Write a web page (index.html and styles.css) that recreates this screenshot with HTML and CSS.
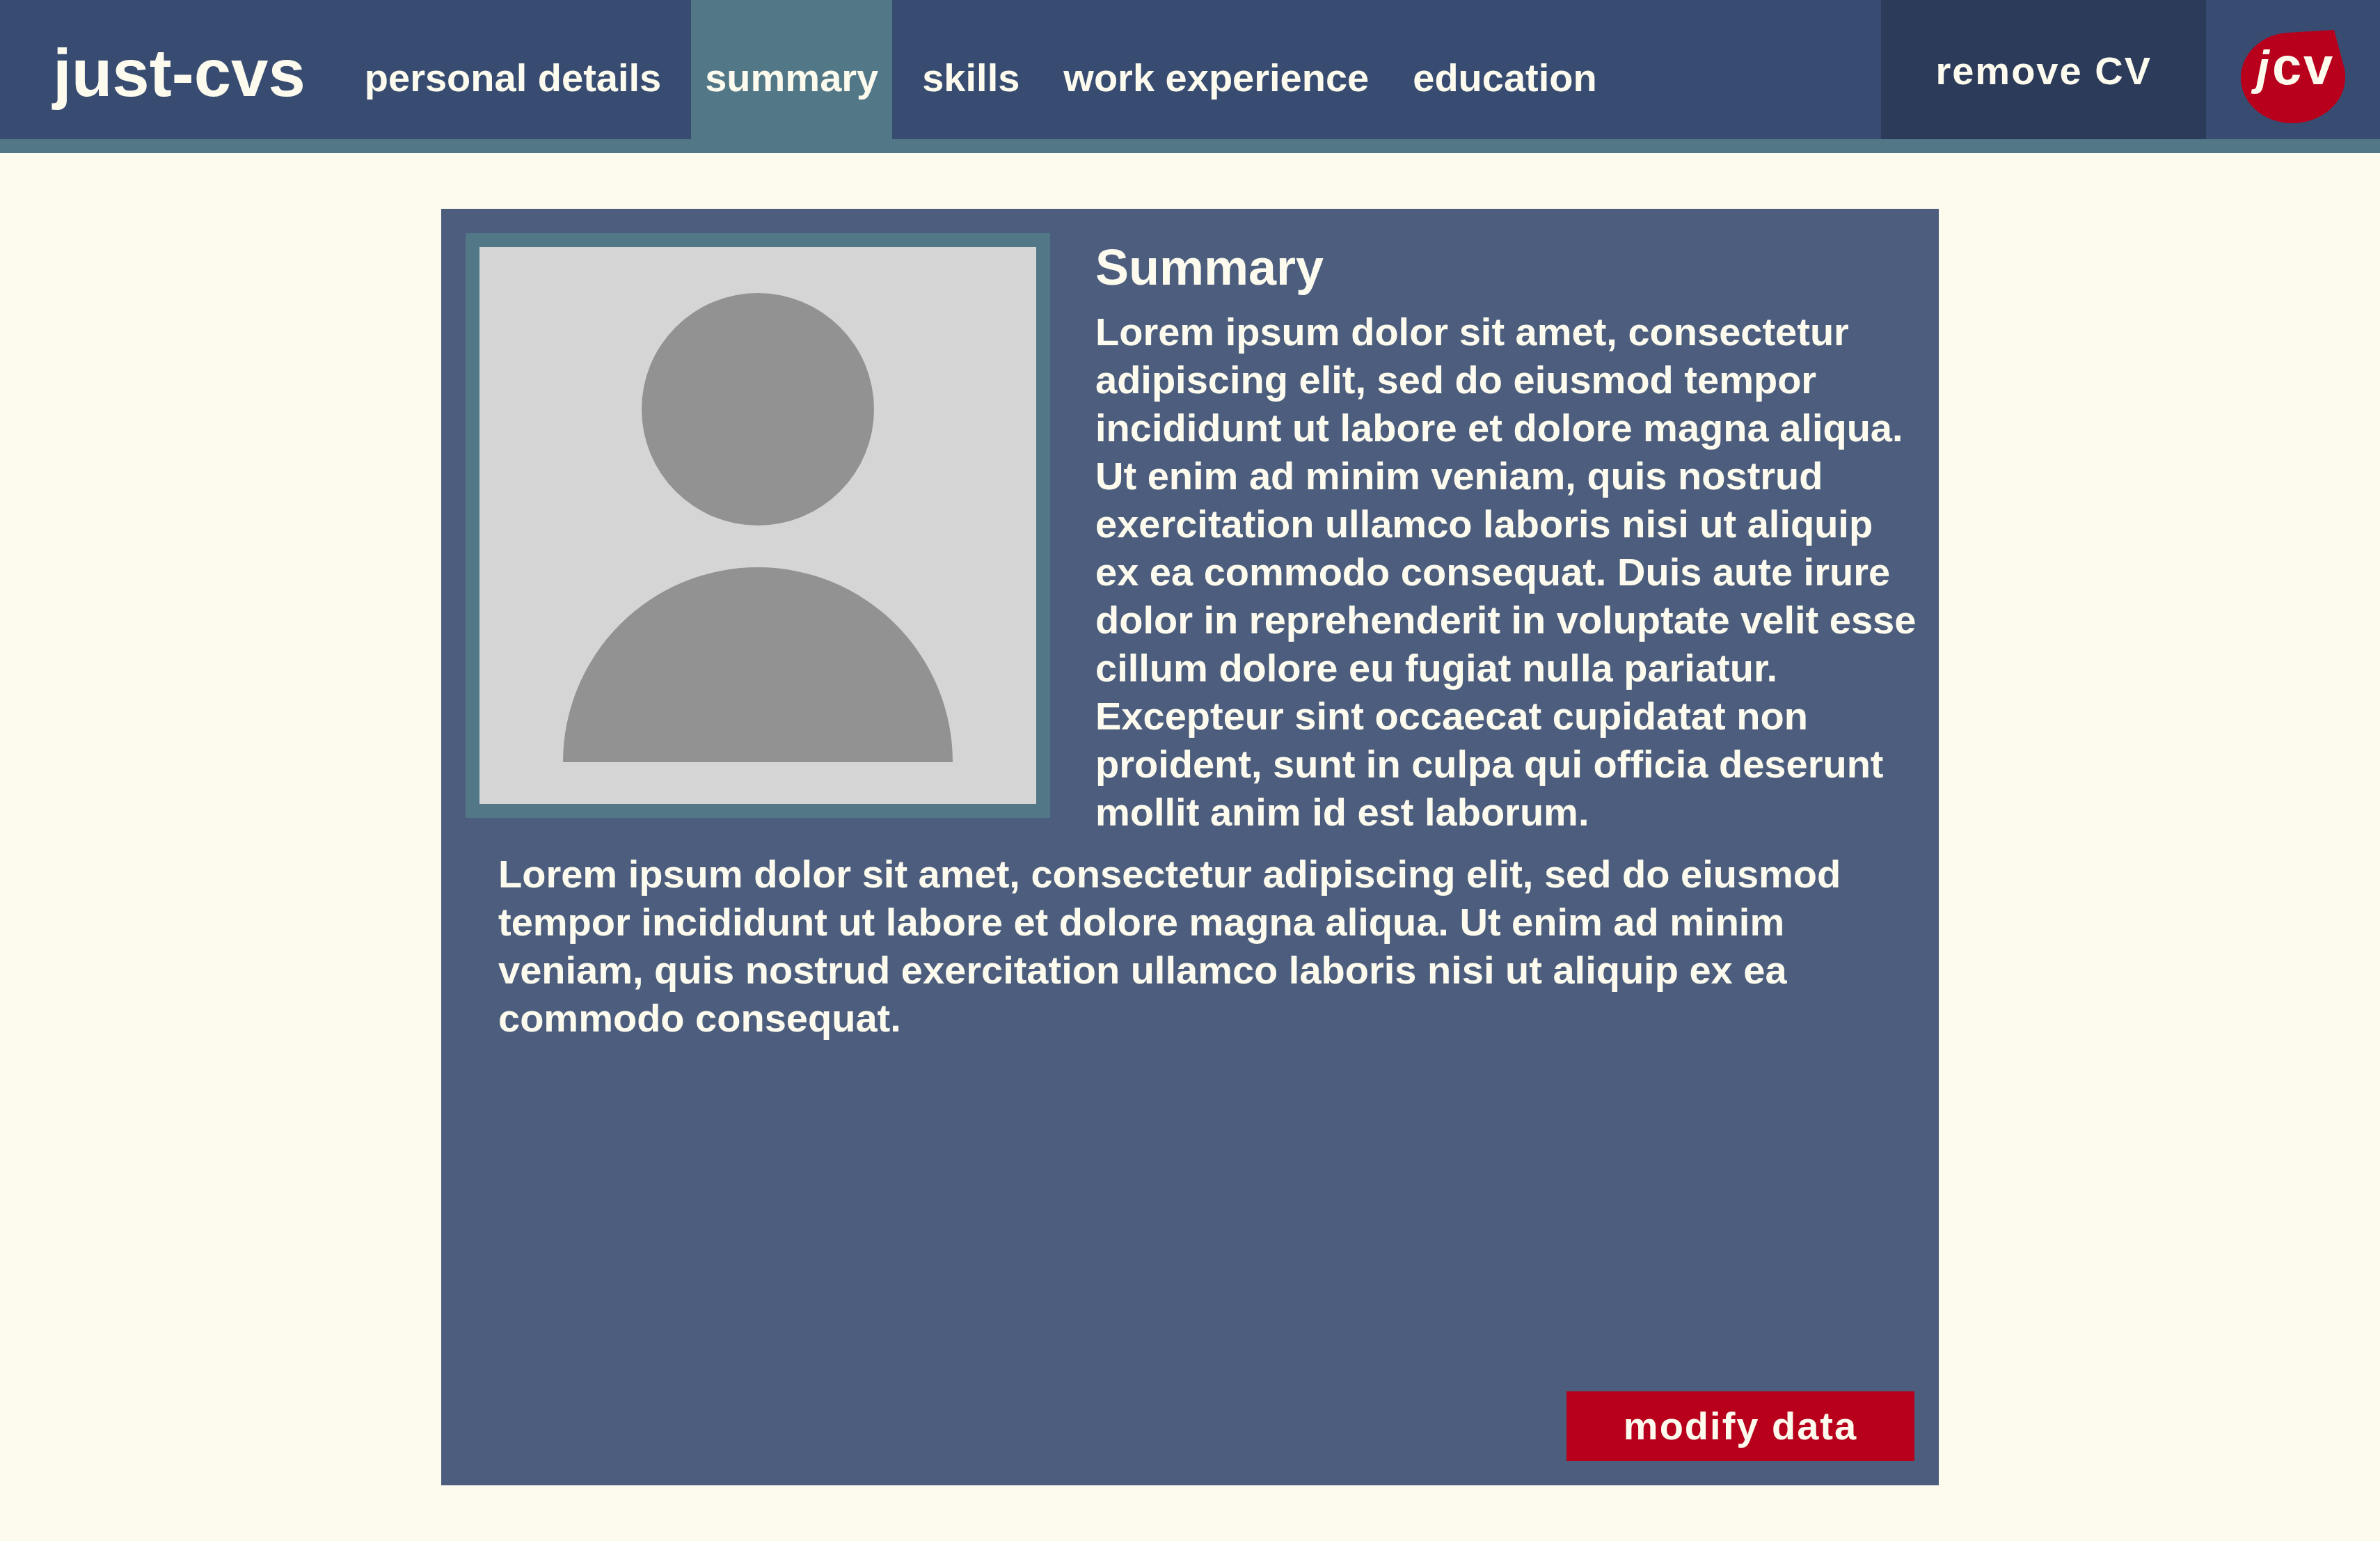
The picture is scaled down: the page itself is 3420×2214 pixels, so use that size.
FILE: index.html
```html
<!DOCTYPE html>
<html lang="en">
<head>
  <meta charset="utf-8">
  <meta name="viewport" content="width=device-width, initial-scale=1">
  <title>just-cvs | summary</title>
  <link rel="stylesheet" href="styles.css">
</head>
<body>
  <header class="site-header">
    <a class="brand" href="#">just-cvs</a>
    <nav class="nav" aria-label="CV sections">
      <a class="nav-link" href="#personal">personal details</a>
      <a class="nav-link nav-link-active" href="#summary" aria-current="page">summary</a>
      <a class="nav-link" href="#skills">skills</a>
      <a class="nav-link" href="#work">work experience</a>
      <a class="nav-link" href="#education">education</a>
    </nav>
    <button class="remove-button" type="button">remove CV</button>
    <a class="badge" href="#" aria-label="jcv home">
      <svg class="badge-mark" viewBox="0 0 150 134" role="img" aria-label="jcv">
        <path class="badge-drop" d="M134 0 L67 4 C30 6 0 34 0 69 C0 105 33 134 74 134 C116 134 150 104 150 69 C150 64 150 60 149 56 Z"/>
        <text class="badge-text" y="78"><tspan class="badge-slant" x="22">j</tspan><tspan x="45">c</tspan><tspan x="90">v</tspan></text>
      </svg>
    </a>
  </header>

  <main class="page">
    <article class="card" id="summary">
      <div class="intro">
        <div class="photo">
          <svg class="photo-image" viewBox="0 0 800 800" role="img" aria-label="Profile photo placeholder">
            <rect class="photo-ground" width="800" height="800"/>
            <circle class="photo-figure" cx="400" cy="233" r="167"/>
            <path class="photo-figure" d="M120 740 A280 280 0 0 1 680 740 Z"/>
          </svg>
        </div>
        <section class="intro-text">
          <h1 class="title">Summary</h1>
          <p class="text">Lorem ipsum dolor sit amet, consectetur adipiscing elit, sed do eiusmod tempor incididunt ut labore et dolore magna aliqua. Ut enim ad minim veniam, quis nostrud exercitation ullamco laboris nisi ut aliquip ex ea commodo consequat. Duis aute irure dolor in reprehenderit in voluptate velit esse cillum dolore eu fugiat nulla pariatur. Excepteur sint occaecat cupidatat non proident, sunt in culpa qui officia deserunt mollit anim id est laborum.</p>
        </section>
      </div>
      <p class="text text-more">Lorem ipsum dolor sit amet, consectetur adipiscing elit, sed do eiusmod tempor incididunt ut labore et dolore magna aliqua. Ut enim ad minim veniam, quis nostrud exercitation ullamco laboris nisi ut aliquip ex ea commodo consequat.</p>
      <button class="modify-button" type="button">modify data</button>
    </article>
  </main>
</body>
</html>
```

FILE: styles.css
```css
:root {
  --cream: #fdfbee;
  --navy: #384c71;
  --navy-dark: #2c3b5a;
  --navy-soft: #4c5d7d;
  --teal: #527787;
  --red: #b8001c;
}

* {
  box-sizing: border-box;
}

body {
  margin: 0;
  display: flex;
  flex-direction: column;
  min-height: 100vh;
  background: var(--cream);
  color: var(--cream);
  font-family: "Liberation Sans", Arial, sans-serif;
  font-size: 56px;
  font-weight: bold;
  line-height: 69px;
}

a {
  color: inherit;
  text-decoration: none;
}

button {
  border: 0;
  color: inherit;
  font: inherit;
  letter-spacing: 2px;
  cursor: pointer;
}

.site-header {
  display: flex;
  align-items: stretch;
  min-height: 220px;
  padding-left: 76px;
  background: var(--navy);
  border-bottom: 20px solid var(--teal);
}

.brand {
  padding-top: 50px;
  margin-right: 65px;
  font-size: 96px;
  line-height: 110px;
}

.nav {
  display: flex;
  gap: 23px;
  margin-right: auto;
}

.nav-link {
  padding: 77px 20px 0;
  white-space: nowrap;
}

.nav-link-active {
  background: var(--teal);
}

.remove-button {
  padding: 2px 78px 0;
  background: var(--navy-dark);
  white-space: nowrap;
}

.badge {
  padding: 43px 50px 0;
}

.badge-mark {
  display: block;
  width: 150px;
}

.badge-drop {
  fill: var(--red);
}

.badge-text {
  fill: var(--cream);
  font-size: 76px;
}

.badge-slant {
  font-size: 68px;
  font-style: italic;
}

.page {
  display: flex;
  flex: 1;
  justify-content: center;
  padding: 80px;
}

.card {
  display: flex;
  flex-direction: column;
  width: 100%;
  max-width: 2152px;
  padding: 35px;
  background: var(--navy-soft);
}

.intro {
  display: flex;
  gap: 65px;
  margin-right: -16px;
}

.photo {
  flex: none;
  align-self: flex-start;
  width: 840px;
  border: 20px solid var(--teal);
}

.photo-image {
  display: block;
  width: 100%;
}

.photo-ground {
  fill: #d5d5d5;
}

.photo-figure {
  fill: #929292;
}

.intro-text {
  flex: 1;
  padding-top: 5px;
}

.title {
  margin: 0 0 14px;
  font-size: 72px;
  line-height: 88px;
}

.text {
  margin: 0;
}

.text-more {
  padding: 20px 47px;
}

.modify-button {
  align-self: flex-end;
  width: 500px;
  height: 100px;
  margin-top: auto;
  padding: 0 0 2px;
  background: var(--red);
}
```
